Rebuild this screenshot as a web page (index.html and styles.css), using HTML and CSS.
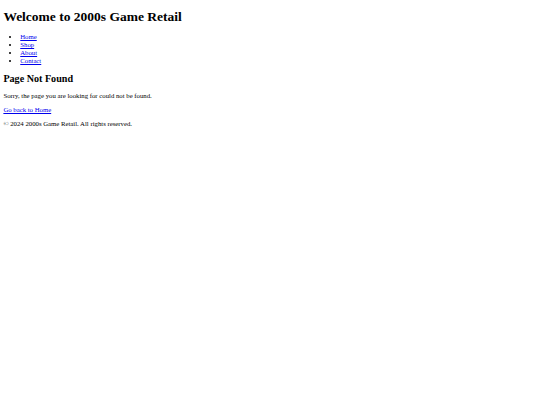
FILE: index.html
```html
<!DOCTYPE html>
<html lang="en">
<head>
<meta charset="utf-8">
<title>Page Not Found - 2000s Game Retail</title>
<link rel="stylesheet" href="styles.css">
</head>
<body class="page">
<header class="site-header">
  <h1 class="site-title">Welcome to 2000s Game Retail</h1>
  <nav class="site-nav">
    <ul class="nav-list">
      <li><a href="#">Home</a></li>
      <li><a href="#">Shop</a></li>
      <li><a href="#">About</a></li>
      <li><a href="#">Contact</a></li>
    </ul>
  </nav>
</header>
<main class="content">
  <h2 class="section-title">Page Not Found</h2>
  <p class="text">Sorry, the page you are looking for could not be found.</p>
  <p class="text"><a href="#">Go back to Home</a></p>
</main>
<footer class="site-footer">
  <p class="text">&copy; 2024 2000s Game Retail. All rights reserved.</p>
</footer>
</body>
</html>
```

FILE: styles.css
```css
html {
  background: #fff;
}
.page {
  margin: 3.375px;
  font-family: "Liberation Serif", "Times New Roman", serif;
  font-size: 6.75px;
  line-height: 7.76px;
  color: #000;
}
.site-title {
  font-size: 13.5px;
  line-height: 15.5px;
  font-weight: bold;
  margin: 5.5px 0 9.045px;
}
.nav-list {
  margin: 6.75px 0;
  padding-left: 16.875px;
  list-style: disc;
}
.section-title {
  font-size: 10.125px;
  line-height: 11.64px;
  font-weight: bold;
  margin: 8.404px 0 7.4px;
}
.text {
  margin: 6.2px 0;
}
a {
  color: #0000ee;
  text-decoration: underline;
}
```
